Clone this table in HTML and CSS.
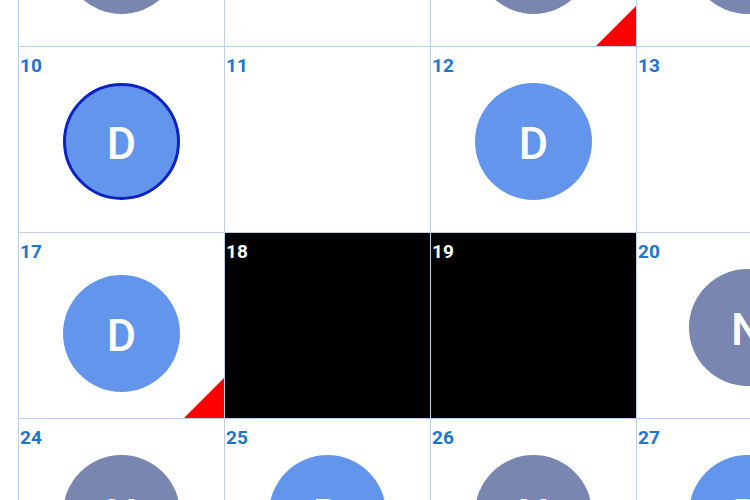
FILE: index.html
```html
<!DOCTYPE html>
<html>
<head>
<meta charset="utf-8">
<link rel="stylesheet" href="styles.css">
</head>
<body>
<div class="cal">
  <div class="day"><span class="num">3</span><div class="ev night">N</div></div>
  <div class="day"><span class="num">4</span></div>
  <div class="day"><span class="num">5</span><div class="ev night">N</div><span class="flag"></span></div>
  <div class="day"><span class="num">6</span><div class="ev night">N</div></div>

  <div class="day"><span class="num">10</span><div class="ev day-shift current">D</div></div>
  <div class="day"><span class="num">11</span></div>
  <div class="day"><span class="num">12</span><div class="ev day-shift">D</div></div>
  <div class="day"><span class="num">13</span></div>

  <div class="day"><span class="num">17</span><div class="ev day-shift low">D</div><span class="flag"></span></div>
  <div class="day selected"><span class="num">18</span></div>
  <div class="day selected"><span class="num">19</span></div>
  <div class="day"><span class="num">20</span><div class="ev night">N</div></div>

  <div class="day"><span class="num">24</span><div class="ev night">N</div></div>
  <div class="day"><span class="num">25</span><div class="ev day-shift">D</div></div>
  <div class="day"><span class="num">26</span><div class="ev night">N</div></div>
  <div class="day"><span class="num">27</span><div class="ev day-shift">D</div></div>
</div>
</body>
</html>
```

FILE: styles.css
```css
html, body {
  margin: 0;
  padding: 0;
  background: #ffffff;
  overflow: hidden;
  width: 750px;
  height: 500px;
}

.cal {
  display: grid;
  grid-template-columns: 206px 206px 206px 221px;
  grid-auto-rows: 186px;
  margin: -140px 0 0 18px;
  width: max-content;
  font-family: Roboto, "Liberation Sans", sans-serif;
}

.day {
  position: relative;
  box-sizing: border-box;
  border-left: 1px solid #bcd0e4;
  border-top: 1px solid #bcd0e4;
  display: flex;
  flex-direction: column;
  align-items: center;
  overflow: hidden;
}

.num {
  align-self: flex-start;
  padding: 8px 0 0 1px;
  font-size: 19px;
  line-height: 22px;
  font-weight: 700;
  color: #1a76d0;
}

.selected {
  background: #000000;
}

.selected .num {
  color: #ffffff;
}

.ev {
  box-sizing: border-box;
  width: 117px;
  height: 117px;
  margin-top: 6px;
  border-radius: 50%;
  display: flex;
  align-items: center;
  justify-content: center;
  color: #ffffff;
  font-size: 45px;
  font-weight: 500;
  padding-top: 3px;
}

.ev.low {
  margin-top: 12px;
}

.day-shift {
  background: #6495ed;
}

.night {
  background: #7886b0;
}

.current {
  border: 3px solid #0b22c4;
}

.flag {
  position: absolute;
  right: 0;
  bottom: 0;
  width: 40px;
  height: 40px;
  background: #ff0000;
  clip-path: polygon(100% 0, 100% 100%, 0 100%);
}
```
